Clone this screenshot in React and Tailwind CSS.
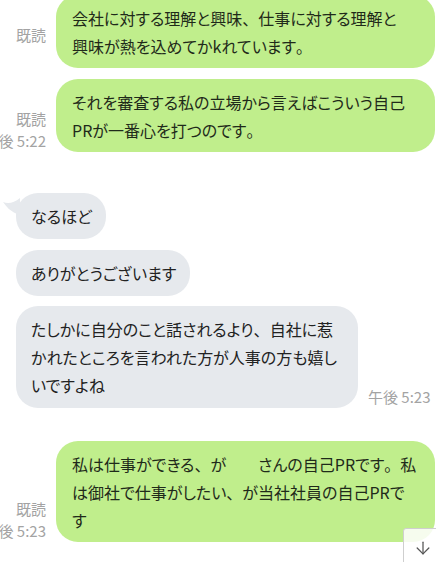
import { ArrowDown } from "lucide-react";

const sent = "bg-[#c0ee8c]";
const recv = "bg-[#e6e9ed]";

// 句読点は全角幅のまま表示する
function Text({ children }) {
  const parts = children.split(/([、。])/);
  return parts.map((p, i) =>
    p === "、" || p === "。" ? (
      <span key={i} className="[font-feature-settings:normal]">
        {p}
      </span>
    ) : (
      <span key={i}>{p}</span>
    )
  );
}

function Meta({ read, time }) {
  return (
    <div className="w-[46px] shrink-0 mr-[10px] flex flex-col items-end text-[15px] leading-[22px] text-[#a3a3a3] whitespace-nowrap">
      {read && <span>既読</span>}
      <span className={time ? "" : "invisible"}>{time || "午後 5:22"}</span>
    </div>
  );
}

function Sent({ lines, read, time, className = "" }) {
  return (
    <div className={`flex items-end ${className}`}>
      <Meta read={read} time={time} />
      <div className={`${sent} w-[379px] rounded-[22px] pl-4 pr-2 pt-[9px] pb-[8px] text-[16px] leading-[28px] text-[#1f2a1a] whitespace-nowrap overflow-hidden`}>
        {lines.map((l, i) => (
          <div key={i}>
            <Text>{l}</Text>
          </div>
        ))}
      </div>
    </div>
  );
}

function Received({ lines, time, tail, width, className = "" }) {
  return (
    <div className={`flex items-end pl-4 ${className}`}>
      <div
        className={`relative ${recv} ${width || "w-fit"} rounded-[22px] pl-[15px] pr-[14px] pt-[9px] pb-[9px] text-[16px] leading-[28px] text-[#222] whitespace-nowrap`}
      >
        {tail && (
          <svg
            className="absolute -left-[14px] top-[3px]"
            width="18"
            height="20"
            viewBox="0 0 18 20"
          >
            <path d="M18 2 C12 7 6 8 1 6 C4 10 8 16 18 19 Z" fill="#e6e9ed" />
          </svg>
        )}
        {lines.map((l, i) => (
          <div key={i}>
            <Text>{l}</Text>
          </div>
        ))}
      </div>
      {time && (
        <div className="ml-[10px] text-[15px] leading-[22px] text-[#a3a3a3] whitespace-nowrap">
          {time}
        </div>
      )}
    </div>
  );
}

export default function App() {
  return (
    <div className="relative h-[562px] w-[436px] overflow-hidden bg-white font-['Noto_Sans_CJK_JP',sans-serif] [font-feature-settings:'palt']">
      <div className="-mt-[5px] flex flex-col">
        <Sent
          read
          lines={["会社に対する理解と興味、仕事に対する理解と", "興味が熱を込めてかkれています。"]}
        />
        <Sent
          className="mt-[11px]"
          read
          time="午後 5:22"
          lines={["それを審査する私の立場から言えばこういう自己", "PRが一番心を打つのです。"]}
        />
        <Received className="mt-[41px]" tail lines={["なるほど"]} />
        <Received className="mt-[11px]" lines={["ありがとうございます"]} />
        <Received
          className="mt-[10px]"
          width="w-[342px]"
          time="午後 5:23"
          lines={[
            "たしかに自分のこと話されるより、自社に惹",
            "かれたところを言われた方が人事の方も嬉し",
            "いですよね",
          ]}
        />
        <Sent
          className="mt-[33px]"
          read
          time="午後 5:23"
          lines={[
            "私は仕事ができる、が　　さんの自己PRです。私",
            "は御社で仕事がしたい、が当社社員の自己PRで",
            "す",
          ]}
        />
      </div>
      <div className="absolute left-[403px] top-[528px] w-10 h-10 rounded-tl-[3px] border border-[#cfcfcf] bg-white/85 flex items-center justify-center">
        <ArrowDown size={20} strokeWidth={1.5} className="text-[#555]" />
      </div>
    </div>
  );
}
